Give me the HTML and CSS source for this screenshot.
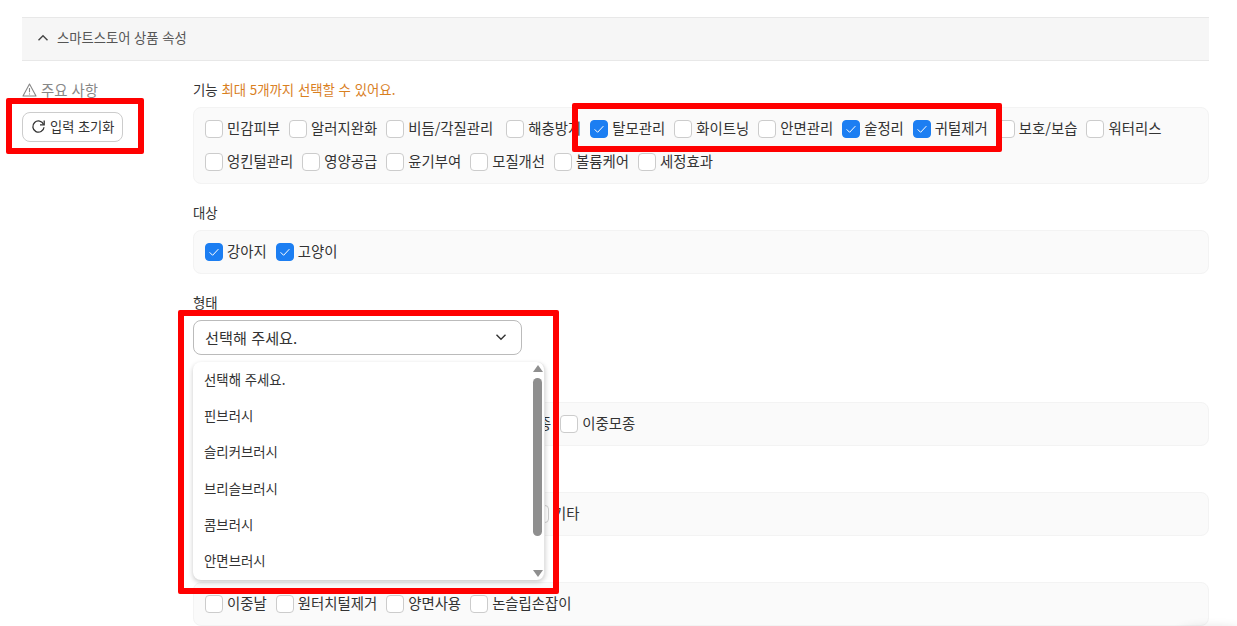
FILE: index.html
```html
<!DOCTYPE html>
<html lang="ko">
<head>
<meta charset="utf-8">
<title>스마트스토어 상품 속성</title>
<link rel="stylesheet" href="styles.css">
</head>
<body>
<svg class="sprite" width="0" height="0" aria-hidden="true">
  <symbol id="check" viewBox="0 0 18 18"><path d="M4.6 9.3l3 3 5.8-6.2" fill="none" stroke="#fff" stroke-width="1"/></symbol>
</svg>
<div class="page">
  <div class="section-head">
    <svg class="head-chevron" width="12" height="8" viewBox="0 0 12 8"><path d="M1.5 6.2L6 1.7l4.5 4.5" fill="none" stroke="#444" stroke-width="1.4"/></svg>
    <span>스마트스토어 상품 속성</span>
  </div>
  <div class="main">
    <aside class="side">
      <div class="notice">
        <svg width="15" height="14" viewBox="0 0 15 14"><path d="M7.5 1L14 13H1z" fill="none" stroke="#888" stroke-width="1.1" stroke-linejoin="round"/><path d="M7.5 5v4.3M7.5 10.4v1.2" stroke="#888" stroke-width="1.1"/></svg>
        <span>주요 사항</span>
      </div>
      <button class="reset" type="button">
        <svg width="15" height="15" viewBox="0 0 15 15"><path d="M12.6 5.4A5.6 5.6 0 1 0 13 8.2" fill="none" stroke="#333" stroke-width="1.3"/><path d="M13.2 1.6v4.2H9" fill="none" stroke="#333" stroke-width="1.3"/></svg>
        <span>입력 초기화</span>
      </button>
    </aside>
    <div class="content">
      <section class="field">
        <div class="field-label">기능 <em class="hint">최대 5개까지 선택할 수 있어요.</em></div>
        <div class="box">
          <label class="item"><i class="cb"></i>민감피부</label>
          <label class="item"><i class="cb"></i>알러지완화</label>
          <label class="item item-wide"><i class="cb"></i>비듬/각질관리</label>
          <label class="item"><i class="cb"></i>해충방지</label>
          <label class="item"><i class="cb on"><svg><use href="#check"/></svg></i>탈모관리</label>
          <label class="item"><i class="cb"></i>화이트닝</label>
          <label class="item"><i class="cb"></i>안면관리</label>
          <label class="item"><i class="cb on"><svg><use href="#check"/></svg></i>숱정리</label>
          <label class="item"><i class="cb on"><svg><use href="#check"/></svg></i>귀털제거</label>
          <label class="item"><i class="cb"></i>보호/보습</label>
          <label class="item"><i class="cb"></i>워터리스</label>
          <label class="item"><i class="cb"></i>엉킨털관리</label>
          <label class="item"><i class="cb"></i>영양공급</label>
          <label class="item"><i class="cb"></i>윤기부여</label>
          <label class="item"><i class="cb"></i>모질개선</label>
          <label class="item"><i class="cb"></i>볼륨케어</label>
          <label class="item"><i class="cb"></i>세정효과</label>
        </div>
      </section>
      <section class="field">
        <div class="field-label">대상</div>
        <div class="box">
          <label class="item"><i class="cb on"><svg><use href="#check"/></svg></i>강아지</label>
          <label class="item"><i class="cb on"><svg><use href="#check"/></svg></i>고양이</label>
        </div>
      </section>
      <section class="field field-select">
        <div class="field-label">형태</div>
        <div class="select">
          <span>선택해 주세요.</span>
          <svg width="12" height="8" viewBox="0 0 12 8"><path d="M1.5 1.7L6 6.2l4.5-4.5" fill="none" stroke="#333" stroke-width="1.4"/></svg>
        </div>
        <div class="dropdown">
          <ul class="options">
            <li>선택해 주세요.</li>
            <li>핀브러시</li>
            <li>슬리커브러시</li>
            <li>브리슬브러시</li>
            <li>콤브러시</li>
            <li>안면브러시</li>
          </ul>
          <div class="scrollbar">
            <span class="arrow arrow-up"></span>
            <span class="thumb"></span>
            <span class="arrow arrow-down"></span>
          </div>
        </div>
      </section>
      <section class="field">
        <div class="field-label"></div>
        <div class="box box-behind-a">
          <span class="item">종</span>
          <label class="item"><i class="cb"></i>이중모종</label>
        </div>
      </section>
      <section class="field">
        <div class="field-label"></div>
        <div class="box box-behind-b">
          <label class="item"><i class="cb"></i>기타</label>
        </div>
      </section>
      <section class="field">
        <div class="field-label"></div>
        <div class="box">
          <label class="item"><i class="cb"></i>이중날</label>
          <label class="item"><i class="cb"></i>원터치털제거</label>
          <label class="item"><i class="cb"></i>양면사용</label>
          <label class="item"><i class="cb"></i>논슬립손잡이</label>
        </div>
      </section>
    </div>
  </div>
  <div class="mark mark-reset"></div>
  <div class="mark mark-checks"></div>
  <div class="mark mark-select"></div>
  <div class="corner-shadow"></div>
</div>
</body>
</html>
```
FILE: styles.css
```css
* { box-sizing: border-box; }
html, body { margin: 0; height: 100%; overflow: hidden; background: #fff; }
body { font-family: "Noto Sans CJK KR", "Noto Sans", sans-serif; color: #333; }
.sprite { position: absolute; }
.page { position: relative; height: 626px; overflow: hidden; padding: 17px 28px 0 22px; }

.section-head {
  display: flex; align-items: center; gap: 8px; height: 43.5px; padding: 0 0 2px 15px;
  background: #f6f6f6; border-top: 1px solid #e8e8e8; border-bottom: 1px solid #e8e8e8;
  font-size: 13.3px; color: #555;
}
.main { display: flex; }
.side { width: 171px; flex: none; padding-top: 19px; }
.notice { display: flex; align-items: center; gap: 4px; height: 20px; font-size: 14.4px; color: #888; }
.reset {
  display: flex; align-items: center; gap: 4px; width: 101px; height: 30px; margin-top: 12.5px; padding: 0 0 1px 8px;
  background: #fff; border: 1px solid #ccc; border-radius: 8px;
  font: 13.2px "Noto Sans CJK KR", sans-serif; color: #333;
}
.content { flex: 1; min-width: 0; padding-top: 19.5px; }
.field { margin-bottom: 19px; }
.field-label { height: 20px; line-height: 19px; margin-bottom: 7px; font-size: 13.4px; color: #333; }
.hint { font-style: normal; color: #d9801f; }
.box {
  display: flex; flex-wrap: wrap; gap: 11.5px 9px; padding: 10px 11px 10.5px;
  background: #fafafa; border: 1px solid #f3f3f3; border-radius: 8px;
}
.item { display: flex; align-items: center; gap: 4px; height: 21.5px; padding-bottom: 2px; font-size: 14.4px; line-height: 20px; color: #333; white-space: nowrap; }
.item-wide { margin-right: 4px; }
.cb { display: block; width: 18px; height: 18px; margin-top: 2px; flex: none; background: #fff; border: 1px solid #ccc; border-radius: 4px; }
.cb.on { background: #1c7ef2; border-color: #1c7ef2; }
.cb svg { display: block; width: 18px; height: 18px; margin: -1px; }
.box-behind-a { padding-left: 344px; }
.box-behind-b { padding-left: 337px; }

.field-select { position: relative; margin-bottom: 20px; }
.select {
  display: flex; align-items: center; justify-content: space-between; width: 329px; height: 35px; padding: 0 14px 2px 11px;
  background: #fff; border: 1px solid #bbb; border-radius: 8px; font-size: 15.2px; color: #333;
}
.dropdown {
  position: absolute; left: 0; top: 69px; z-index: 2; width: 352px; height: 218px;
  background: #fff; border-radius: 8px; border-right: 1px solid #e4e4e4;
  box-shadow: 0 2px 5px rgba(0, 0, 0, .22);
}
.options { margin: 0; padding: 0 0 0 11px; list-style: none; font-size: 13.4px; color: #333; }
.options li { height: 36.2px; line-height: 35px; }
.scrollbar {
  position: absolute; right: 2px; top: 3px; bottom: 3px; width: 9px;
  display: flex; flex-direction: column; align-items: center;
}
.thumb { width: 9px; height: 158px; margin-top: 6px; background: #8f8f8f; border-radius: 5px; }
.arrow { width: 0; height: 0; border-left: 5px solid transparent; border-right: 5px solid transparent; }
.arrow-up { border-bottom: 7px solid #8f8f8f; }
.arrow-down { margin-top: auto; border-top: 7px solid #8f8f8f; }

.mark { position: absolute; z-index: 3; border: 6px solid #f00; border-radius: 2px; pointer-events: none; }
.mark-reset { left: 6px; top: 98px; width: 138px; height: 56px; }
.mark-checks { left: 572px; top: 103px; width: 430px; height: 49px; }
.mark-select { left: 178px; top: 310px; width: 381px; height: 284px; }
.corner-shadow {
  position: absolute; right: -10px; bottom: -16px; width: 70px; height: 16px;
  border-radius: 50%; box-shadow: 0 0 10px rgba(0, 0, 0, .1);
}
```
